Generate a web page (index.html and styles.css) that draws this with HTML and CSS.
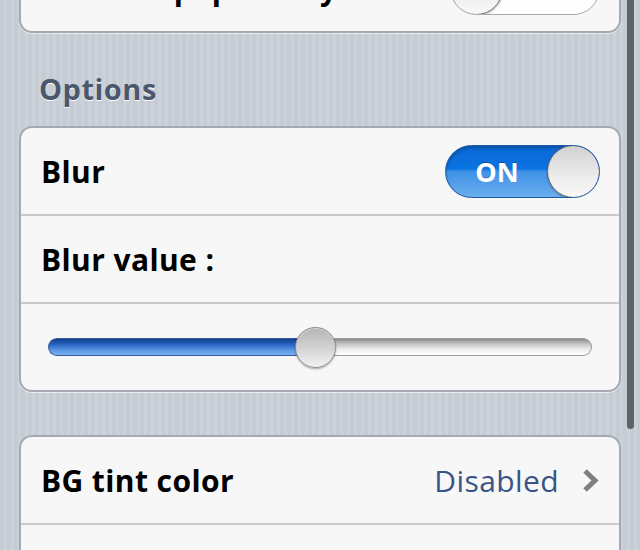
FILE: index.html
```html
<!DOCTYPE html>
<html>
<head>
<meta charset="utf-8">
<link rel="stylesheet" href="styles.css">
</head>
<body>
<div class="view">
  <div class="card card-first">
    <div class="row">
      <span class="label">Tint wallpaper only</span>
      <div class="switch switch-off"><span class="knob"></span><span class="switch-text">OFF</span></div>
    </div>
  </div>

  <h2 class="section-title">Options</h2>

  <div class="card">
    <div class="row">
      <span class="label">Blur</span>
      <div class="switch switch-on"><span class="switch-text">ON</span><span class="knob"></span></div>
    </div>
    <div class="row">
      <span class="label">Blur value :</span>
    </div>
    <div class="row row-slider">
      <div class="slider">
        <div class="track-fill" style="width: 49%"></div>
        <div class="track-rest"></div>
        <span class="thumb" style="left: 49%"></span>
      </div>
    </div>
  </div>

  <div class="card card-gap">
    <div class="row">
      <span class="label">BG tint color</span>
      <span class="value">Disabled</span>
      <svg class="chevron" width="17" height="25" viewBox="0 0 17 25"><polyline points="3,3 13,12.5 3,22" fill="none" stroke="#7f7f7f" stroke-width="5"/></svg>
    </div>
    <div class="row"></div>
  </div>
</div>
<div class="scrollbar"></div>
</body>
</html>
```
FILE: styles.css
```css
* { box-sizing: border-box; }
html, body {
  margin: 0;
  padding: 0;
  width: 640px;
  height: 550px;
  overflow: hidden;
}
body {
  position: relative;
  font-family: "Open Sans", "DejaVu Sans", sans-serif;
  background-color: #c5ccd4;
  background-image: repeating-linear-gradient(90deg, #c5ccd4 0px, #c5ccd4 4px, #cbd2d9 4px, #cbd2d9 7px);
}
.view {
  padding: 0 19px;
}
.card {
  background: #f7f7f7;
  border: 2px solid #a5aab2;
  border-radius: 13px;
  box-shadow: 0 1px 0 rgba(255,255,255,0.6);
  overflow: hidden;
}
.card-first {
  margin-top: -57px;
}
.card-gap {
  margin-top: 43px;
}
.row {
  height: 86px;
  display: flex;
  align-items: center;
  padding: 0 20px 0 20px;
}
.row + .row {
  height: 88px;
  border-top: 2px solid #c9c9c9;
}
.label {
  font-size: 30px;
  letter-spacing: 0.4px;
  font-weight: 700;
  color: #000;
  flex: 1;
}
.value {
  font-size: 30px;
  letter-spacing: 0.4px;
  color: #385487;
  margin-right: 23px;
}
.chevron {
  flex: none;
  margin-right: 0;
}
.section-title {
  margin: 0;
  padding: 38px 0 0 20px;
  height: 93px;
  line-height: 36px;
  font-size: 29px;
  letter-spacing: 0.5px;
  font-weight: 700;
  color: #4c566c;
  text-shadow: 0 1px 0 #fff;
}
.switch {
  flex: none;
  width: 155px;
  height: 53px;
  border-radius: 27px;
  display: flex;
  align-items: center;
  position: relative;
  overflow: hidden;
}
.switch-on {
  background: linear-gradient(180deg, #0b68d4 0%, #0a74e2 45%, #3f91e6 50%, #6aaeee 100%);
  border: 1px solid #1f5aa5;
  box-shadow: inset 0 2px 3px rgba(0,0,0,0.25);
  margin-right: -1px;
}
.switch-off {
  background: linear-gradient(180deg, #e6e6e6 0%, #fdfdfd 50%, #fff 100%);
  border: 1px solid #a8a8a8;
  margin-right: -1px;
  width: 150px;
}
.switch-text {
  flex: 1;
  text-align: center;
  font-size: 27px;
  font-weight: 700;
  color: #fff;
  text-shadow: 0 -1px 0 rgba(0,0,0,0.25);
}
.switch-off .switch-text {
  color: #808080;
  text-shadow: none;
}
.knob {
  flex: none;
  width: 53px;
  height: 53px;
  margin: -1px;
  border-radius: 50%;
  background: linear-gradient(180deg, #d1d1d1 0%, #ececec 60%, #f9f9f9 100%);
  border: 1px solid #666;
  box-shadow: 0 1px 2px rgba(0,0,0,0.3);
}
.row-slider {
  padding: 0 27px 0 27px;
}
.slider {
  flex: 1;
  height: 18px;
  position: relative;
  display: flex;
}
.track-fill {
  height: 18px;
  border-radius: 9px 0 0 9px;
  background: linear-gradient(180deg, #11408f 0%, #2a64c0 35%, #5a96e2 70%, #79b0f0 100%);
  border: 1px solid #345c9b;
  border-right: none;
}
.track-rest {
  flex: 1;
  height: 18px;
  border-radius: 0 9px 9px 0;
  background: linear-gradient(180deg, #8a8a8a 0%, #c2c2c2 30%, #eeeeee 65%, #ffffff 100%);
  border: 1px solid #9a9a9a;
  border-left: none;
}
.thumb {
  position: absolute;
  top: 50%;
  width: 41px;
  height: 41px;
  margin: -20px 0 0 -20px;
  border-radius: 50%;
  background: linear-gradient(180deg, #b4b4b4 0%, #d2d2d2 50%, #f2f2f2 100%);
  border: 1px solid #8c8c8c;
  box-shadow: 0 1px 2px rgba(0,0,0,0.35), inset 0 1px 0 rgba(255,255,255,0.5);
}
.scrollbar {
  position: absolute;
  top: 0;
  left: 627px;
  width: 7px;
  height: 429px;
  background: #5f646a;
  border-radius: 0 0 4px 4px;
}
```
